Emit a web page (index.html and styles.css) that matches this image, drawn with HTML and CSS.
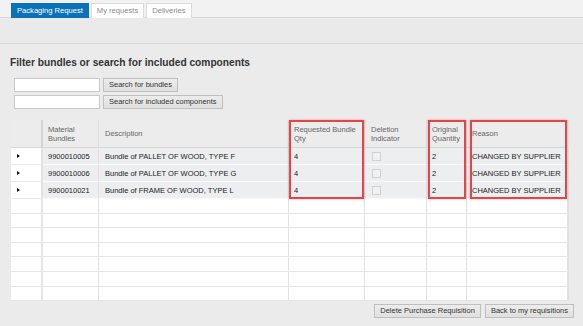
FILE: index.html
```html
<!DOCTYPE html>
<html>
<head>
<meta charset="utf-8">
<link rel="stylesheet" href="styles.css">
</head>
<body>
<div class="tabbar">
  <div class="tab active">Packaging Request</div>
  <div class="tab">My requests</div>
  <div class="tab">Deliveries</div>
</div>
<div class="band"></div>
<h1 class="title">Filter bundles or search for included components</h1>
<div class="search">
  <div class="srow"><input class="field" type="text"><button class="btn">Search for bundles</button></div>
  <div class="srow"><input class="field" type="text"><button class="btn">Search for included components</button></div>
</div>
<div class="table">
  <div class="row head">
    <div class="c sel"></div>
    <div class="c">Material<br>Bundles</div>
    <div class="c">Description</div>
    <div class="c">Requested Bundle<br>Qty</div>
    <div class="c">Deletion<br>Indicator</div>
    <div class="c">Original<br>Quantity</div>
    <div class="c">Reason</div>
    <div class="c sb"></div>
  </div>
  <div class="row data">
    <div class="c sel"><span class="tri"></span></div>
    <div class="c">9900010005</div>
    <div class="c">Bundle of PALLET OF WOOD, TYPE F</div>
    <div class="c">4</div>
    <div class="c"><span class="chk"></span></div>
    <div class="c">2</div>
    <div class="c">CHANGED BY SUPPLIER</div>
    <div class="c sb"></div>
  </div>
  <div class="row data">
    <div class="c sel"><span class="tri"></span></div>
    <div class="c">9900010006</div>
    <div class="c">Bundle of PALLET OF WOOD, TYPE G</div>
    <div class="c">4</div>
    <div class="c"><span class="chk"></span></div>
    <div class="c">2</div>
    <div class="c">CHANGED BY SUPPLIER</div>
    <div class="c sb"></div>
  </div>
  <div class="row data">
    <div class="c sel"><span class="tri"></span></div>
    <div class="c">9900010021</div>
    <div class="c">Bundle of FRAME OF WOOD, TYPE L</div>
    <div class="c">4</div>
    <div class="c"><span class="chk"></span></div>
    <div class="c">2</div>
    <div class="c">CHANGED BY SUPPLIER</div>
    <div class="c sb"></div>
  </div>
  <div class="row empty"><div class="c sel"></div><div class="c"></div><div class="c"></div><div class="c"></div><div class="c"></div><div class="c"></div><div class="c"></div><div class="c sb"></div></div>
  <div class="row empty"><div class="c sel"></div><div class="c"></div><div class="c"></div><div class="c"></div><div class="c"></div><div class="c"></div><div class="c"></div><div class="c sb"></div></div>
  <div class="row empty"><div class="c sel"></div><div class="c"></div><div class="c"></div><div class="c"></div><div class="c"></div><div class="c"></div><div class="c"></div><div class="c sb"></div></div>
  <div class="row empty"><div class="c sel"></div><div class="c"></div><div class="c"></div><div class="c"></div><div class="c"></div><div class="c"></div><div class="c"></div><div class="c sb"></div></div>
  <div class="row empty"><div class="c sel"></div><div class="c"></div><div class="c"></div><div class="c"></div><div class="c"></div><div class="c"></div><div class="c"></div><div class="c sb"></div></div>
  <div class="row empty"><div class="c sel"></div><div class="c"></div><div class="c"></div><div class="c"></div><div class="c"></div><div class="c"></div><div class="c"></div><div class="c sb"></div></div>
  <div class="row empty last"><div class="c sel"></div><div class="c"></div><div class="c"></div><div class="c"></div><div class="c"></div><div class="c"></div><div class="c"></div><div class="c sb"></div></div>
  <div class="hl hl-qty"></div>
  <div class="hl hl-orig"></div>
  <div class="hl hl-reason"></div>
</div>
<div class="footer">
  <button class="btn">Delete Purchase Requisition</button>
  <button class="btn">Back to my requisitions</button>
</div>
</body>
</html>
```
FILE: styles.css
```css
* { box-sizing: border-box; }
html, body { margin: 0; padding: 0; }
body {
  background: #ebebeb;
  font-family: "Liberation Sans", Arial, sans-serif;
  color: #333;
  width: 583px;
  height: 326px;
  overflow: hidden;
}
.tabbar {
  height: 18px;
  background: #f2f2f2;
  border-bottom: 1px solid #d9d9d9;
  padding: 3px 0 0 11px;
  display: flex;
  gap: 2px;
}
.tab {
  height: 15px;
  padding: 0 5px;
  font-size: 7.6px;
  line-height: 14px;
  color: #8a8a8a;
  background: #fff;
  border: 1px solid #dcdcdc;
  border-bottom: none;
}
.tab.active {
  background: #0b72b9;
  border-color: #0b72b9;
  color: #fff;
  padding: 0 5px;
}
.band {
  height: 26px;
  background: #eaeaea;
  border-bottom: 1px solid #d6d6d6;
}
.title {
  margin: 13px 0 0 10px;
  font-size: 10.2px;
  line-height: 12px;
  font-weight: bold;
  color: #333;
}
.search {
  margin: 9px 0 0 14px;
  display: flex;
  flex-direction: column;
  gap: 3px;
}
.srow { display: flex; gap: 3px; height: 14px; }
.field {
  width: 86px;
  height: 14px;
  margin: 0;
  background: #fff;
  border: 1px solid #c9c9c9;
  padding: 0;
}
.btn {
  height: 14px;
  margin: 0;
  padding: 0 5px;
  font-family: "Liberation Sans", Arial, sans-serif;
  font-size: 7.5px;
  line-height: 12px;
  color: #333;
  background: linear-gradient(#ececec, #e0e0e0);
  border: 1px solid #bfbfbf;
  border-radius: 0;
}
.table {
  position: relative;
  margin: 11px 0 0 11px;
  width: 566px;
}
.row {
  display: grid;
  grid-template-columns: 32px 56px 190px 76px 62px 40px 101px 9px;
  font-size: 7.5px;
}
.c {
  border-right: 1px solid #e2e2e2;
  border-bottom: 1px solid #e4e4e4;
  padding-left: 5px;
  display: flex;
  align-items: center;
  white-space: nowrap;
}
.row .c:nth-child(3) { padding-left: 6px; }
.row .c:nth-child(5) { padding-left: 6px; }
.head { height: 28px; }
.head .c {
  background: #ececec;
  color: #666;
  line-height: 9px;
  border-right-color: #dedede;
  border-bottom: 1px solid #d6d6d6;
}
.head .c.sel { border-right: 2px solid #d3d3d3; }
.head .c.sb { background: #efefef; border-right: none; }
.data { height: 17px; }
.data .c {
  background: #eceef0;
  color: #222;
  border-bottom-color: #fafafa;
}
.data .c.sel { background: #fff; border-right: 2px solid #e2e2e2; border-bottom-color: #eaeaea; }
.empty { height: 14.6px; }
.empty .c { background: #fff; border-bottom-color: #e6e6e6; }
.empty .c.sel { border-right: 2px solid #e6e6e6; }
.row .c.sb { background: #ebebeb; border-right: none; border-bottom-color: #ebebeb; border-left: 1px solid #dedede; }
.head .c.sb { border-left: none; }
.tri {
  width: 0;
  height: 0;
  margin-left: 1px;
  border-top: 2.5px solid transparent;
  border-bottom: 2.5px solid transparent;
  border-left: 3px solid #111;
}
.chk {
  width: 9px;
  height: 9px;
  margin-left: 1px;
  background: #f1f1f1;
  border: 1px solid #d2d2d2;
}
.hl {
  position: absolute;
  top: 0;
  height: 79px;
  border: 2px solid #e0474a;
  box-shadow: 0 0 2px rgba(224, 71, 74, 0.5);
}
.hl-qty { left: 278px; width: 75px; }
.hl-orig { left: 417px; width: 38px; }
.hl-reason { left: 459px; width: 97px; }
.footer {
  display: flex;
  justify-content: flex-end;
  gap: 4px;
  margin: 3px 9px 0 0;
}
```
